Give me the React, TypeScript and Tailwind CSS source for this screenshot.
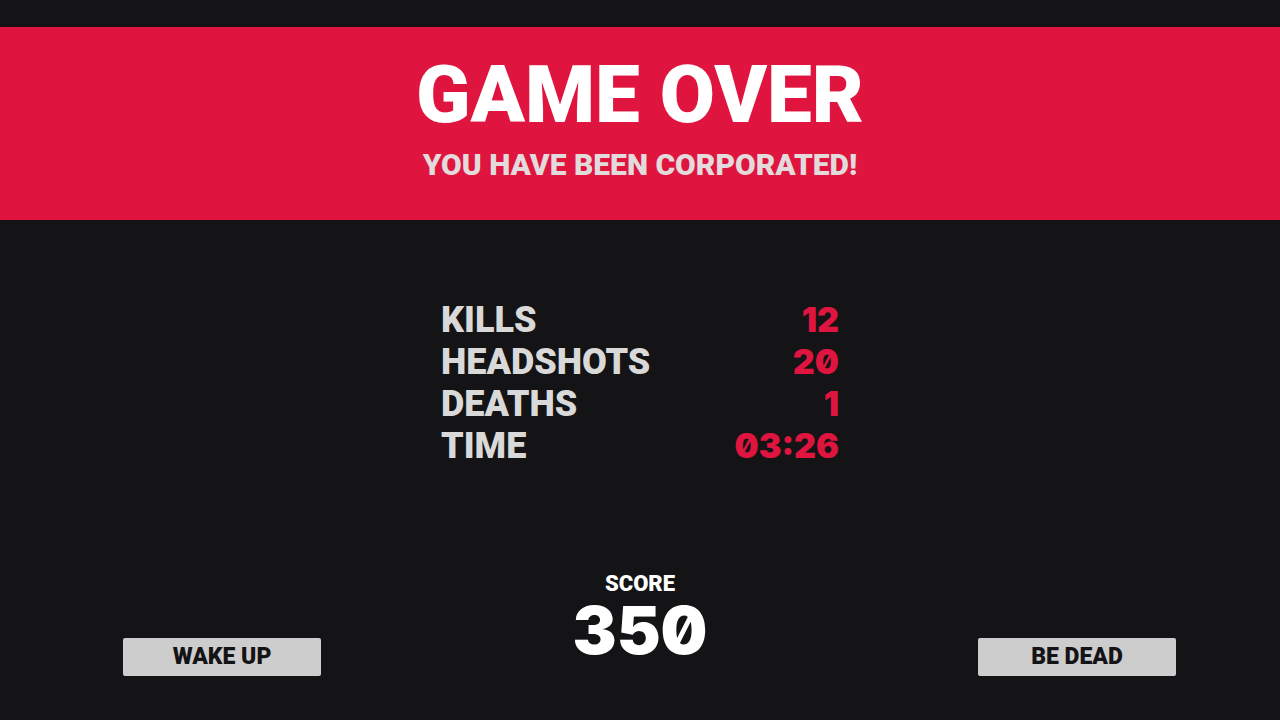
interface Stat {
  label: string;
  value: string;
}

const stats: Stat[] = [
  { label: "KILLS", value: "12" },
  { label: "HEADSHOTS", value: "20" },
  { label: "DEATHS", value: "1" },
  { label: "TIME", value: "03:26" },
];

interface MenuButtonProps {
  label: string;
}

function MenuButton({ label }: MenuButtonProps) {
  return (
    <button
      type="button"
      className="h-[38px] w-[198px] rounded-xs bg-[#cdcdcd] text-[23px] leading-6 font-black text-[#141416] hover:bg-white"
    >
      {label}
    </button>
  );
}

export default function App() {
  return (
    <div className="flex min-h-screen flex-col bg-[#141416] pt-[27px] font-[Roboto,'Liberation_Sans',sans-serif] font-black">
      <header className="bg-[#e0153f] pt-7 pb-[39px] text-center">
        <h1 className="text-[80px] leading-20 text-white">
          GAME OVER
        </h1>
        <p className="mt-[14px] text-[30px] leading-8 text-[#e2dadb]">
          YOU HAVE BEEN CORPORATED!
        </p>
      </header>

      <main className="flex justify-center pt-[79px] pb-10">
        <table className="w-[398px] leading-[42px]">
          <tbody>
            {stats.map((stat) => (
              <tr key={stat.label}>
                <th
                  scope="row"
                  className="p-0 text-left text-[36px] font-black text-[#d9d9d9]"
                >
                  {stat.label}
                </th>
                <td className="p-0 text-right font-[Inter,sans-serif] text-[34px] slashed-zero text-[#e0153f]">
                  {stat.value}
                </td>
              </tr>
            ))}
          </tbody>
        </table>
      </main>

      <footer className="mt-auto grid grid-cols-[1fr_auto_1fr] items-end pb-11">
        <div className="pl-[123px]">
          <MenuButton label="WAKE UP" />
        </div>
        <div className="pb-3 text-center text-white">
          <p className="text-[22px] leading-6">SCORE</p>
          <p className="font-[Inter,sans-serif] text-[66px] leading-[68px] slashed-zero">
            350
          </p>
        </div>
        <div className="flex justify-end pr-[104px]">
          <MenuButton label="BE DEAD" />
        </div>
      </footer>
    </div>
  );
}
